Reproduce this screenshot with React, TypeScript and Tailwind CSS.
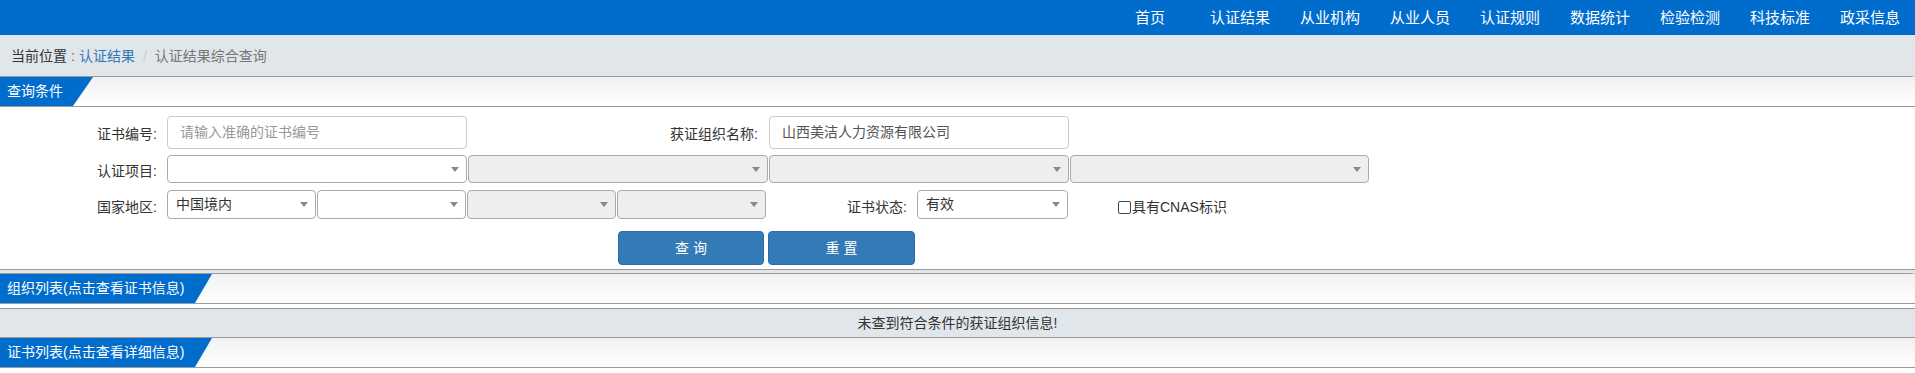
import React from "react";

const navItems = ["首页", "认证结果", "从业机构", "从业人员", "认证规则", "数据统计", "检验检测", "科技标准", "政采信息"];

const Arrow = () => (
  <svg width="8" height="5" viewBox="0 0 8 5" className="shrink-0">
    <path d="M0 0h8L4 5z" fill="#888" />
  </svg>
);

function Select({ w, h, text, disabled }: { w: string; h: string; text?: string; disabled?: boolean }) {
  return (
    <div
      className={`${w} ${h} ${disabled ? "bg-[#eeeeee]" : "bg-white"} border border-[#aaaaaa] rounded-[4px] flex items-center justify-between pl-[8px] pr-[7px] text-[14px] text-[#333]`}
    >
      <span>{text ?? ""}</span>
      <Arrow />
    </div>
  );
}

function Header({ title, tabW, tabB }: { title: string; tabW: number; tabB: number }) {
  return (
    <div className="relative h-[29px] bg-gradient-to-b from-[#f1f1f1] to-[#ffffff]">
      <div
        className="absolute left-0 top-0 h-full bg-[#006dcd] text-white text-[14px] leading-[29px] pl-[7px]"
        style={{ width: tabW, clipPath: `polygon(0 0, ${tabW}px 0, ${tabB}px 100%, 0 100%)` }}
      >
        {title}
      </div>
    </div>
  );
}

export default function App() {
  return (
    <div className="w-[1915px] h-[373px] overflow-hidden bg-white font-['Liberation_Sans','Noto_Sans_CJK_SC',sans-serif] text-[14px] text-[#333]">
      {/* Top nav */}
      <div className="h-[35px] bg-[#006dcd] flex justify-end">
        {navItems.map((n) => (
          <div key={n} className="w-[90px] text-center text-white text-[15px] leading-[35px]">
            {n}
          </div>
        ))}
      </div>
      <div className="bg-[#e1e6ea]">
        {/* Breadcrumb */}
        <div className="h-[41px] flex items-center pl-[11px] pt-[1px] text-[14px]">
          <span className="text-[#333]">当前位置</span>
          <span className="text-[#666] px-[4px]">:</span>
          <span className="text-[#337ab7]">认证结果</span>
          <span className="text-[#cccccc] px-[8px]">/</span>
          <span className="text-[#777]">认证结果综合查询</span>
        </div>

        {/* Panel 1 */}
        <div className="bg-white border-t border-b border-[#9a9a9a] rounded-tr-[4px]">
          <Header title="查询条件" tabW={93} tabB={73} />
          <div className="border-t border-[#9a9a9a] pt-[9px] pb-[5px] h-[163px]">
            {/* Row 1 */}
            <div className="flex items-center h-[33px]">
              <div className="w-[157px] text-right pt-[3px]">证书编号:</div>
              <div className="ml-[10px] w-[300px] h-[33px] border border-[#cccccc] rounded-[4px] flex items-center pl-[12px] text-[#999]">
                请输入准确的证书编号
              </div>
              <div className="w-[291px] text-right pt-[3px]">获证组织名称:</div>
              <div className="ml-[11px] w-[300px] h-[33px] border border-[#cccccc] rounded-[4px] flex items-center pl-[12px] text-[#555]">
                山西美洁人力资源有限公司
              </div>
            </div>
            {/* Row 2 */}
            <div className="flex items-center h-[28px] mt-[6px]">
              <div className="w-[157px] text-right pt-[5px]">认证项目:</div>
              <div className="ml-[10px] flex gap-[1px]">
                <Select w="w-[300px]" h="h-[28px]" />
                <Select w="w-[300px]" h="h-[28px]" disabled />
                <Select w="w-[300px]" h="h-[28px]" disabled />
                <Select w="w-[299px]" h="h-[28px]" disabled />
              </div>
            </div>
            {/* Row 3 */}
            <div className="flex items-center h-[29px] mt-[7px]">
              <div className="w-[157px] text-right pt-[5px]">国家地区:</div>
              <div className="ml-[10px] flex gap-[1px]">
                <Select w="w-[149px]" h="h-[29px]" text="中国境内" />
                <Select w="w-[149px]" h="h-[29px]" />
                <Select w="w-[149px]" h="h-[29px]" disabled />
                <Select w="w-[149px]" h="h-[29px]" disabled />
              </div>
              <div className="w-[141px] text-right pt-[5px]">证书状态:</div>
              <div className="ml-[10px]">
                <Select w="w-[151px]" h="h-[29px]" text="有效" />
              </div>
              <div className="ml-[50px] flex items-center pt-[5px]">
                <span className="w-[13px] h-[13px] border border-[#444] rounded-[2px] bg-white mr-[1px]" />
                <span>具有CNAS标识</span>
              </div>
            </div>
            {/* Buttons */}
            <div className="flex mt-[12px] pl-[618px] gap-[4px]">
              <div className="w-[146px] h-[34px] bg-[#337ab7] border border-[#2e6da4] rounded-[4px] flex items-center justify-center text-white text-[14px]">
                查 询
              </div>
              <div className="w-[147px] h-[34px] bg-[#337ab7] border border-[#2e6da4] rounded-[4px] flex items-center justify-center text-white text-[14px]">
                重 置
              </div>
            </div>
          </div>
        </div>

        <div className="h-[3px]" />

        {/* Panel 2 */}
        <div className="bg-white border-t border-[#9a9a9a] rounded-tr-[4px]">
          <Header title="组织列表(点击查看证书信息)" tabW={212} tabB={195} />
          <div className="border-t border-[#9a9a9a] h-[5px] bg-white" />
          <div className="border-t border-b border-[#9a9a9a] bg-[#e1e6ea] h-[30px] flex items-center justify-center text-[14px] text-[#333]">
            未查到符合条件的获证组织信息!
          </div>
          <Header title="证书列表(点击查看详细信息)" tabW={212} tabB={195} />
          <div className="border-t border-[#9a9a9a] h-[10px] bg-white" />
        </div>
      </div>
    </div>
  );
}
